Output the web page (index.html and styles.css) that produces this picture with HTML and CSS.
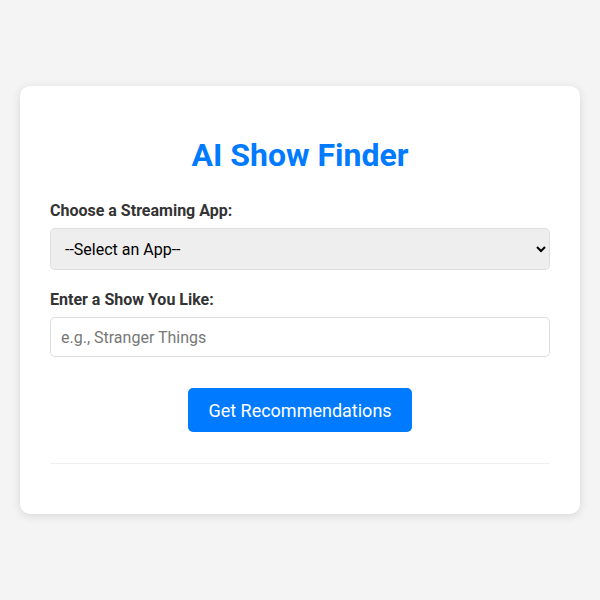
FILE: index.html
```html
<!DOCTYPE html>
<html>
<head>
<meta charset="utf-8">
<link rel="stylesheet" href="styles.css">
</head>
<body>
<div class="card">
  <h1 class="title">AI Show Finder</h1>
  <label class="label" for="app">Choose a Streaming App:</label>
  <select id="app" class="select">
    <option>--Select an App--</option>
  </select>
  <label class="label label-second" for="show">Enter a Show You Like:</label>
  <input id="show" class="input" type="text" placeholder="e.g., Stranger Things">
  <div class="actions">
    <button class="button">Get Recommendations</button>
  </div>
  <hr class="divider">
</div>
</body>
</html>
```
FILE: styles.css
```css
html, body {
  margin: 0;
  padding: 0;
}
body {
  background: #f4f4f4;
  font-family: Roboto, "Liberation Sans", sans-serif;
  min-height: 100vh;
  display: flex;
  align-items: center;
  justify-content: center;
  color: #333;
}
.card {
  box-sizing: border-box;
  width: 560px;
  background: #fff;
  border-radius: 10px;
  padding: 30px;
  box-shadow: 0 2px 10px rgba(0, 0, 0, 0.12);
}
.title {
  margin: 20px 0 27px;
  text-align: center;
  font-size: 32px;
  font-weight: 700;
  color: #007bff;
}
.label {
  display: block;
  font-size: 16px;
  font-weight: 700;
  color: #333;
  margin-bottom: 8px;
}
.label-second {
  margin-top: 20px;
}
.select {
  display: block;
  box-sizing: border-box;
  width: 100%;
  height: 42px;
  padding: 0 10px;
  font-family: Roboto, "Liberation Sans", sans-serif;
  font-size: 16px;
  color: #000;
  background-color: #eee;
  border: 1px solid #ddd;
  border-radius: 5px;
}
.input {
  display: block;
  box-sizing: border-box;
  width: 100%;
  height: 40px;
  padding: 0 10px;
  font-family: Roboto, "Liberation Sans", sans-serif;
  font-size: 16px;
  border: 1px solid #ddd;
  border-radius: 5px;
}
.input::placeholder {
  color: #777;
}
.actions {
  display: flex;
  justify-content: center;
  margin-top: 31px;
}
.button {
  height: 44px;
  padding: 0 20px;
  font-family: Roboto, "Liberation Sans", sans-serif;
  font-size: 18px;
  color: #fff;
  background: #007bff;
  border: none;
  border-radius: 5px;
}
.divider {
  margin: 31px 0 20px;
  border: none;
  border-top: 1px solid #eee;
}
```
